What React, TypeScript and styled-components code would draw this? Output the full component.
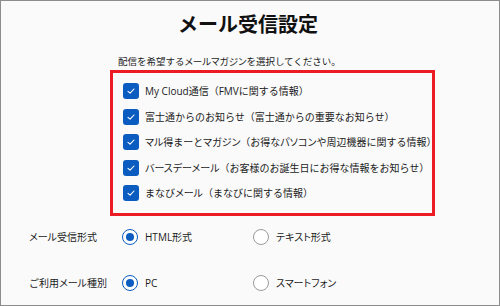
import React from 'react';
import styled, { createGlobalStyle } from 'styled-components';

const GlobalStyle = createGlobalStyle`
  html, body {
    margin: 0;
    padding: 0;
    background: #fafafa;
  }
  body {
    font-family: "Open Sans", "Noto Sans CJK JP", sans-serif;
    color: #1b1b1b;
  }
`;

const magazines = [
  'My Cloud通信（FMVに関する情報）',
  '富士通からのお知らせ（富士通からの重要なお知らせ）',
  'マル得まーとマガジン（お得なパソコンや周辺機器に関する情報）',
  'バースデーメール（お客様のお誕生日にお得な情報をお知らせ）',
  'まなびメール（まなびに関する情報）',
];

const settings = [
  { label: 'メール受信形式', options: ['HTML形式', 'テキスト形式'] },
  { label: 'ご利用メール種別', options: ['PC', 'スマートフォン'] },
];

// katakana in the original is set with proportional widths
const Kana = styled.span`
  font-feature-settings: "palt";
`;

const Jp = ({ text }: { text: string }) => (
  <>
    {text.split(/([ァ-ヶー]+)/).map((part, i) =>
      i % 2 === 1 ? <Kana key={i}>{part}</Kana> : part
    )}
  </>
);

const Frame = styled.div`
  box-sizing: border-box;
  width: 500px;
  height: 306px;
  border: 1px solid #8c8c8c;
  background: #fafafa;
  display: flex;
  flex-direction: column;
  overflow: hidden;
`;

const Title = styled.h1`
  margin: 11px 0 0;
  font-family: "Noto Sans CJK JP", sans-serif;
  font-size: 20px;
  line-height: 24px;
  font-weight: 700;
  text-align: center;
  padding-right: 4px;
  color: #111;
`;

const Lead = styled.p`
  margin: 19px 0 0 117px;
  font-size: 9.5px;
  line-height: 14px;
  color: #1b1b1b;
`;

const SelectBox = styled.div`
  box-sizing: border-box;
  margin: 1px 0 0 109px;
  width: 325px;
  height: 146px;
  border: 3px solid #ec1c24;
  padding: 10px 0 0 10px;
  display: flex;
  flex-direction: column;
  gap: 9.5px;
`;

const CheckRow = styled.label`
  display: flex;
  align-items: center;
  gap: 6px;
  height: 16px;
  font-size: 10px;
  line-height: 16px;
  white-space: nowrap;
`;

const CheckMark = styled.span`
  box-sizing: border-box;
  width: 16px;
  height: 16px;
  border-radius: 3px;
  background: #0b5cc0;
  display: flex;
  align-items: center;
  justify-content: center;
  flex: none;
`;

const Settings = styled.div`
  margin: 12.5px 0 0 28px;
  display: flex;
  flex-direction: column;
  gap: 30.5px;
`;

const SettingRow = styled.div`
  display: grid;
  grid-template-columns: 93px 131px 131px;
  align-items: center;
  height: 16px;
`;

const SettingLabel = styled.span`
  font-size: 10px;
  line-height: 16px;
  white-space: nowrap;
`;

const RadioOption = styled.label`
  display: flex;
  align-items: center;
  gap: 7px;
  font-size: 10px;
  line-height: 16px;
  white-space: nowrap;
`;

const RadioCircle = styled.span<{ $on: boolean }>`
  box-sizing: border-box;
  width: 16px;
  height: 16px;
  border-radius: 50%;
  border: 1px solid ${(p) => (p.$on ? '#0b5cc0' : '#9a9a9a')};
  background: #fff;
  display: flex;
  align-items: center;
  justify-content: center;
  flex: none;

  &::after {
    content: '';
    width: 8px;
    height: 8px;
    border-radius: 50%;
    background: ${(p) => (p.$on ? '#0b5cc0' : 'transparent')};
  }
`;

const Check = () => (
  <svg width="10" height="10" viewBox="0 0 10 10">
    <polyline
      points="2,5.3 4.1,7.2 8,3"
      fill="none"
      stroke="#fff"
      strokeWidth="1.1"
      strokeLinecap="round"
      strokeLinejoin="round"
    />
  </svg>
);

export default function App() {
  return (
    <>
      <GlobalStyle />
      <Frame>
        <Title>メール受信設定</Title>
        <Lead>
          <Jp text="配信を希望するメールマガジンを選択してください。" />
        </Lead>
        <SelectBox>
          {magazines.map((m) => (
            <CheckRow key={m}>
              <CheckMark>
                <Check />
              </CheckMark>
              <span>
                <Jp text={m} />
              </span>
            </CheckRow>
          ))}
        </SelectBox>
        <Settings>
          {settings.map((s) => (
            <SettingRow key={s.label}>
              <SettingLabel>
                <Jp text={s.label} />
              </SettingLabel>
              {s.options.map((o, i) => (
                <RadioOption key={o}>
                  <RadioCircle $on={i === 0} />
                  <span>
                    <Jp text={o} />
                  </span>
                </RadioOption>
              ))}
            </SettingRow>
          ))}
        </Settings>
      </Frame>
    </>
  );
}
